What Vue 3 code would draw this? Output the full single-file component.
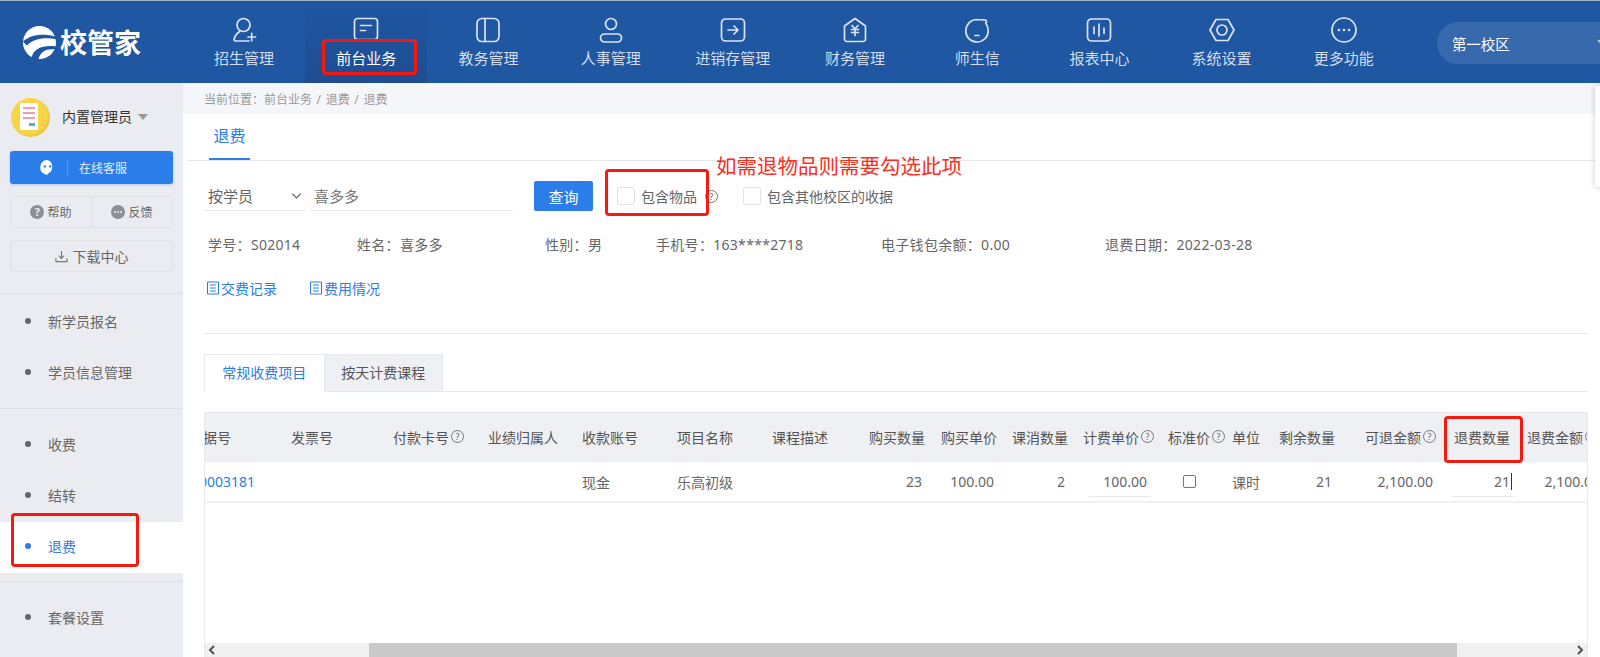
<script setup>
const navItems = [
  { label: '招生管理', paths: ['M18 24H4.5c-1 0-1.500-.8-1.300-1.700.7-3.300 2.600-6 5.500-7.800', 'M17 20h7.500M20.700 16.300v7.500'], circles: [[12.500, 8, 6.500]] },
  { label: '前台业务', active: true, rects: [[1.500, 1.500, 23, 21, 3]], paths: ['M7.500 8.500h11M7.500 13.500h5'] },
  { label: '教务管理', rects: [[2, 1.500, 22, 23, 5]], paths: ['M10 1.500v23'] },
  { label: '人事管理', rects: [[2.500, 17, 21, 8, 4]], circles: [[13, 7, 5.500]] },
  { label: '进销存管理', rects: [[1.500, 2, 23, 22, 4]], paths: ['M8 13h10M14 9l4 4-4 4'] },
  { label: '财务管理', paths: ['M13 1.500l10.500 7.500v13a2.500 2.500 0 0 1-2.500 2.500H5A2.500 2.500 0 0 1 2.500 22V9z', 'M10 8.500l3 3.500 3-3.500M9.500 12.500h7M9.500 15.500h7M13 12v6.500'] },
  { label: '师生信', paths: ['M13 2.500C6.700 2.500 1.800 7.700 1.800 14s5 11 11.200 11 11.200-5 11.200-11c0-3-.9-5.800-2.500-8 1.300-1 1.200-2.500-.4-2.800-2.500-.5-5.400-.7-8.500-.7z', 'M11 18.500h4'] },
  { label: '报表中心', rects: [[1.500, 2, 23, 22, 4]], paths: ['M8 10v6.500M13 7v12M18 11v5.500'] },
  { label: '系统设置', paths: ['M7 2.500h12l6 10.500-6 10.500H7L1 13z'], circles: [[13, 13, 5]] },
  { label: '更多功能', circles: [[13, 13, 12]], dots: [[8, 13], [13, 13], [18, 13]] }
]

const menuGroups = [
  ['新学员报名', '学员信息管理'],
  ['收费', '结转', '退费'],
  ['套餐设置']
]

const infoItems = ['学号：S02014', '姓名：喜多多', '性别：男', '手机号：163****2718', '电子钱包余额：0.00', '退费日期：2022-03-28']

const columns = [
  { title: '单据号', value: '00003181', link: true },
  { title: '发票号' },
  { title: '付款卡号', help: true },
  { title: '业绩归属人' },
  { title: '收款账号', value: '现金' },
  { title: '项目名称', value: '乐高初级' },
  { title: '课程描述' },
  { title: '购买数量', value: '23', right: true },
  { title: '购买单价', value: '100.00', right: true },
  { title: '课消数量', value: '2', right: true },
  { title: '计费单价', help: true, value: '100.00', input: true, right: true },
  { title: '标准价', help: true, check: true },
  { title: '单位', value: '课时' },
  { title: '剩余数量', value: '21', right: true },
  { title: '可退金额', help: true, value: '2,100.00', right: true },
  { title: '退费数量', value: '21', input: true, caret: true, right: true },
  { title: '退费金额', help: true, value: '2,100.00', right: true }
]
</script>

<template>
  <div class="page">
    <header class="topbar">
      <div class="logo">
        <svg class="logo-mark" viewBox="0 0 36 36" aria-hidden="true">
          <circle cx="18" cy="18" r="17" fill="#fff" />
          <path d="M1 17c7-7 20-9 34-5l1 3C24 12 12 14 5 21z" fill="#1f57a3" />
          <path d="M10 35c0-9 9-15 25-13l-1 3c-9-1-15 2-17 10z" fill="#1f57a3" />
        </svg>
        <span class="logo-text">校管家</span>
      </div>
      <nav class="nav">
        <a v-for="item in navItems" :key="item.label" class="nav-item" :class="{ active: item.active }">
          <svg class="nav-icon" viewBox="0 0 26 26" aria-hidden="true">
            <rect v-for="(r, i) in item.rects" :key="'r' + i" :x="r[0]" :y="r[1]" :width="r[2]" :height="r[3]" :rx="r[4]" />
            <circle v-for="(c, i) in item.circles" :key="'c' + i" :cx="c[0]" :cy="c[1]" :r="c[2]" />
            <path v-for="(d, i) in item.paths" :key="'p' + i" :d="d" />
            <circle v-for="(c, i) in item.dots" :key="'d' + i" class="dot" :cx="c[0]" :cy="c[1]" r="1.300" />
          </svg>
          <span>{{ item.label }}</span>
        </a>
      </nav>
      <div class="campus">
        <span>第一校区</span>
        <svg class="campus-arrow" viewBox="0 0 12 8" aria-hidden="true"><path d="M1 1l5 5 5-5" /></svg>
      </div>
    </header>

    <div class="body">
      <aside class="sidebar">
        <div class="user">
          <div class="avatar"><div class="avatar-card"><i></i><i></i><i></i><b></b></div></div>
          <span class="user-name">内置管理员</span>
          <span class="user-arrow"></span>
        </div>
        <button class="service">
          <svg class="service-icon" viewBox="0 0 16 16" aria-hidden="true">
            <path d="M8 1a6.800 6.800 0 0 0-3 12.900c1 .5 2 1 3.500 1.100-.4-.4-.6-.8-.6-1.200A6.800 6.800 0 0 0 8 1z" fill="#fff" />
            <circle cx="5.500" cy="7" r="1.100" fill="#2b7de9" />
            <circle cx="10.500" cy="7" r="1.100" fill="#2b7de9" />
          </svg>
          <span class="service-line"></span>
          <span>在线客服</span>
        </button>
        <div class="help-row">
          <a class="help-btn">
            <span class="round-icon">?</span>帮助
          </a>
          <a class="help-btn">
            <svg class="round-svg" viewBox="0 0 14 14" aria-hidden="true">
              <circle cx="7" cy="7" r="7" fill="#8e8e93" />
              <circle cx="4" cy="7" r="1" fill="#ebecf1" />
              <circle cx="7" cy="7" r="1" fill="#ebecf1" />
              <circle cx="10" cy="7" r="1" fill="#ebecf1" />
            </svg>反馈
          </a>
        </div>
        <a class="download">
          <svg viewBox="0 0 14 14" aria-hidden="true"><path d="M7 1v8M4 6l3 3 3-3M1 9v3.500h12V9" /></svg>
          下载中心
        </a>
        <div class="menu">
          <div v-for="(group, i) in menuGroups" :key="i" class="menu-group">
            <a v-for="name in group" :key="name" class="menu-item" :class="{ current: name === '退费' }">
              <span class="menu-dot"></span>{{ name }}
            </a>
          </div>
        </div>
      </aside>

      <main class="main">
        <div class="crumb">当前位置：前台业务 / 退费 / 退费</div>
        <div class="content">
          <div class="page-tabs"><span class="page-tab">退费</span></div>

          <div class="filter">
            <div class="field field-select">按学员
              <svg viewBox="0 0 12 8" aria-hidden="true"><path d="M1.500 1.500L6 6l4.500-4.500" /></svg>
            </div>
            <div class="field field-input">喜多多</div>
            <button class="query">查询</button>
            <label class="check first"><span class="box"></span>包含物品</label>
            <span class="help-mark">?</span>
            <label class="check second"><span class="box"></span>包含其他校区的收据</label>
          </div>

          <div class="info">
            <span v-for="text in infoItems" :key="text">{{ text }}</span>
          </div>

          <div class="links">
            <a v-for="text in ['交费记录', '费用情况']" :key="text" class="link">
              <svg viewBox="0 0 14 14" aria-hidden="true"><path d="M1.500 1h11v12h-11zM4 4h6M4 7h6M4 10h6" /></svg>{{ text }}
            </a>
          </div>

          <div class="split"></div>

          <div class="card-tabs">
            <span class="card-tab on">常规收费项目</span>
            <span class="card-tab">按天计费课程</span>
          </div>

          <div class="table-wrap">
            <div class="table">
              <div v-for="col in columns" :key="col.title" class="cell head" :class="{ right: col.right }">
                {{ col.title }}<span v-if="col.help" class="help-mark small">?</span>
              </div>
              <div v-for="col in columns" :key="col.title + '-v'" class="cell row" :class="{ right: col.right, link: col.link }">
                <span v-if="col.check" class="row-check"></span>
                <span v-else-if="col.input" class="row-input" :class="{ caret: col.caret }">{{ col.value }}</span>
                <template v-else>{{ col.value }}</template>
              </div>
            </div>
            <div class="scrollbar">
              <svg class="scroll-arrow" viewBox="0 0 8 12" aria-hidden="true"><path d="M6 2L2 6l4 4" /></svg>
              <div class="scroll-track"><div class="scroll-thumb"></div></div>
              <svg class="scroll-arrow" viewBox="0 0 8 12" aria-hidden="true"><path d="M2 2l4 4-4 4" /></svg>
            </div>
          </div>
        </div>
      </main>
    </div>

    <div class="side-float"></div>

    <!-- 红色标注 -->
    <div class="mark mark-nav"></div>
    <div class="mark mark-check"></div>
    <div class="mark mark-col"></div>
    <div class="mark mark-menu"></div>
    <div class="mark-text">如需退物品则需要勾选此项</div>
  </div>
</template>

<style scoped>
.page {
  position: relative;
  width: 1600px;
  height: 657px;
  overflow: hidden;
  display: flex;
  flex-direction: column;
  font-family: "Noto Sans", "Noto Sans CJK SC", sans-serif;
  font-size: 14px;
  color: #666;
  background: #fff;
}

.topbar {
  flex: none;
  height: 82px;
  display: flex;
  background: #1f57a3;
  border-top: 1px solid #9fb0c8;
}

.logo {
  width: 183px;
  flex: none;
  display: flex;
  align-items: center;
  gap: 3px;
  padding-left: 22px;
  box-sizing: border-box;
}

.logo-mark {
  width: 35px;
  height: 35px;
}

.logo-text {
  font-size: 27px;
  font-weight: 700;
  color: #fff;
  line-height: 1;
}

.nav {
  display: flex;
}

.nav-item {
  width: 122.200px;
  display: flex;
  flex-direction: column;
  align-items: center;
  padding-top: 16px;
  box-sizing: border-box;
  font-size: 15px;
  color: #d3dded;
}

.nav-item.active {
  background: linear-gradient(#1f57a3, #1e4c92);
  color: #fff;
}

.nav-icon {
  width: 26px;
  height: 26px;
  margin-bottom: 4px;
  fill: none;
  stroke: #dbe4f1;
  stroke-width: 1.700;
  stroke-linejoin: round;
  stroke-linecap: round;
}

.nav-icon .dot {
  fill: #dbe4f1;
  stroke: none;
}

.campus {
  margin-left: 32px;
  margin-top: 21px;
  flex: none;
  width: 180px;
  height: 42px;
  border-radius: 21px 0 0 21px;
  background: #3869ad;
  display: flex;
  align-items: center;
  padding-left: 15px;
  box-sizing: border-box;
  color: #fff;
  font-size: 14.500px;
}

.campus-arrow {
  width: 12px;
  height: 8px;
  margin-left: 87px;
  fill: none;
  stroke: #dbe4f1;
  stroke-width: 1.300;
}

.body {
  flex: 1;
  display: flex;
  min-height: 0;
}

.sidebar {
  width: 183px;
  flex: none;
  background: #ebecf1;
  padding-top: 15px;
  box-sizing: border-box;
}

.user {
  display: flex;
  align-items: center;
  padding-left: 11px;
  height: 39px;
  color: #333;
}

.avatar {
  width: 39px;
  height: 39px;
  border-radius: 50%;
  background: radial-gradient(circle at 45% 45%, #f7d548 60%, #b9993a 100%);
  display: flex;
  justify-content: center;
  align-items: flex-start;
  padding-top: 5px;
  box-sizing: border-box;
}

.avatar-card {
  width: 18px;
  height: 27px;
  background: #fff;
  display: flex;
  flex-direction: column;
  gap: 3px;
  padding: 4px 3px;
  box-sizing: border-box;
  margin-right: 3px;
}

.avatar-card i {
  display: block;
  height: 2px;
  background: #ee9db0;
}

.avatar-card b {
  display: block;
  width: 6px;
  height: 3px;
  margin: 1px 0 0 6px;
  background: #4bb3d8;
}

.user-name {
  margin-left: 12px;
  margin-top: -3px;
}

.user-arrow {
  margin-left: 6px;
  margin-top: -2px;
  border-left: 5px solid transparent;
  border-right: 5px solid transparent;
  border-top: 6px solid #999;
}

.service {
  display: flex;
  align-items: center;
  width: 163px;
  height: 33px;
  margin: 14px 0 0 10px;
  padding: 0 0 0 29px;
  box-sizing: border-box;
  border: 0;
  border-radius: 3px;
  background: #2b7de9;
  color: #e4eefc;
  font: inherit;
  font-size: 12px;
  box-shadow: 0 1px 3px rgba(43, 125, 233, 0.3);
}

.service-icon {
  width: 17px;
  height: 17px;
}

.service-line {
  width: 1px;
  height: 16px;
  margin: 0 11px 0 11px;
  background: rgba(255, 255, 255, 0.2);
}

.help-row {
  display: flex;
  width: 163px;
  height: 32px;
  margin: 12px 0 0 10px;
  border: 1px solid #e0e1e6;
  border-radius: 4px;
  box-sizing: border-box;
  font-size: 12px;
}

.help-btn {
  flex: 1;
  display: flex;
  align-items: center;
  justify-content: center;
  gap: 3px;
}

.help-btn + .help-btn {
  border-left: 1px solid #e0e1e6;
}

.round-icon {
  width: 14px;
  height: 14px;
  border-radius: 50%;
  background: #8e8e93;
  color: #ebecf1;
  font-size: 11px;
  font-weight: 700;
  line-height: 14px;
  text-align: center;
}

.round-svg {
  width: 14px;
  height: 14px;
}

.download {
  display: flex;
  align-items: center;
  justify-content: center;
  gap: 5px;
  width: 163px;
  height: 32px;
  margin: 12px 0 0 10px;
  border: 1px solid #e0e1e6;
  border-radius: 4px;
  box-sizing: border-box;
}

.download svg {
  width: 13px;
  height: 13px;
  fill: none;
  stroke: #777;
  stroke-width: 1.200;
}

.menu {
  margin-top: 21px;
}

.menu-group {
  padding: 11px 0 8px;
  border-top: 1px solid #dfe0e5;
}

.menu-group:first-child {
  padding: 3px 0 9px;
}

.menu-item {
  height: 51px;
  box-sizing: border-box;
  display: flex;
  align-items: center;
  padding: 0 0 3px 25px;
  color: #666;
}

.menu-dot {
  width: 6px;
  height: 6px;
  border-radius: 50%;
  background: #666;
  margin-right: 17px;
}

.menu-item.current {
  background: #fff;
  color: #2b7de9;
}

.menu-item.current .menu-dot {
  background: #2b7de9;
}

.main {
  flex: 1;
  min-width: 0;
  display: flex;
  flex-direction: column;
}

.crumb {
  flex: none;
  height: 31px;
  line-height: 33px;
  padding-left: 21px;
  background: #f5f6fa;
  font-size: 12px;
  word-spacing: 1.500px;
  color: #999;
}

.content {
  flex: 1;
  min-height: 0;
  padding-left: 4px;
  display: flex;
  flex-direction: column;
}

.page-tabs {
  flex: none;
  height: 46px;
  border-bottom: 1px solid #e8e9ef;
  padding-left: 22px;
}

.page-tab {
  display: inline-block;
  width: 41px;
  height: 46px;
  box-sizing: border-box;
  padding-top: 10px;
  font-size: 16px;
  line-height: 24px;
  text-align: center;
  white-space: nowrap;
  color: #2b7de9;
  border-bottom: 2px solid #2b7de9;
}

.filter {
  flex: none;
  height: 30px;
  margin-top: 20px;
  display: flex;
  align-items: center;
  padding-left: 17px;
}

.field {
  height: 30px;
  box-sizing: border-box;
  border-bottom: 1px solid #e8e9ef;
  display: flex;
  align-items: center;
  padding-left: 4px;
  font-size: 15px;
  color: #666;
}

.field-select {
  width: 101px;
  justify-content: space-between;
  padding-right: 3px;
}

.field-select svg {
  width: 11px;
  height: 8px;
  fill: none;
  stroke: #666;
  stroke-width: 1.300;
}

.field-input {
  width: 203px;
  margin-left: 5px;
  color: #777;
}

.query {
  width: 59px;
  height: 30px;
  margin-left: 21px;
  padding: 0;
  border: 0;
  border-radius: 2px;
  background: #2b7de9;
  color: #fff;
  font: inherit;
  font-size: 15px;
}

.check {
  display: flex;
  align-items: center;
  gap: 6px;
  color: #666;
}

.check.first {
  margin-left: 24px;
}

.check.second {
  margin-left: 25px;
}

.box {
  width: 18px;
  height: 18px;
  box-sizing: border-box;
  border: 1px solid #dfe1e8;
  border-radius: 3px;
  background: #fff;
}

.help-mark {
  display: inline-block;
  flex: none;
  width: 11px;
  height: 11px;
  margin-left: 8px;
  border: 1px solid #777;
  border-radius: 50%;
  font-size: 9px;
  line-height: 11px;
  text-align: center;
  color: #666;
}

.help-mark.small {
  margin-left: 2px;
  vertical-align: 1px;
}

.info {
  flex: none;
  margin-top: 18px;
  padding-left: 21px;
  height: 30px;
  display: grid;
  grid-template-columns: 149px 188px 111px 225px 224px auto;
  align-items: center;
  letter-spacing: 0.300px;
  color: #666;
}

.links {
  flex: none;
  margin-top: 14px;
  padding-left: 19px;
  height: 30px;
  display: flex;
  align-items: center;
  gap: 32px;
}

.link {
  display: flex;
  align-items: center;
  gap: 1px;
  color: #2b7de9;
}

.link svg {
  width: 14px;
  height: 14px;
  fill: none;
  stroke: #2b7de9;
  stroke-width: 1;
}

.split {
  flex: none;
  height: 1px;
  margin: 30px 12px 0 17px;
  background: #e8e9ef;
}

.card-tabs {
  flex: none;
  margin: 20px 12px 0 17px;
  height: 37px;
  display: flex;
  border-bottom: 1px solid #e8e9ef;
}

.card-tab {
  width: 119.500px;
  box-sizing: border-box;
  height: 37px;
  border: 1px solid #e8e9ef;
  border-bottom: 0;
  text-align: center;
  line-height: 36px;
  background: #eff0f4;
  color: #555;
}

.card-tab.on {
  background: #fff;
  color: #2b7de9;
  border-right: 0;
  margin-bottom: -1px;
  height: 38px;
}

.table-wrap {
  flex: 1;
  min-height: 0;
  margin: 20px 12px 0 17px;
  border-left: 1px solid #e8e9ef;
  border-right: 1px solid #e8e9ef;
  display: flex;
  flex-direction: column;
  overflow: hidden;
}

.table {
  flex: 1;
  min-height: 0;
  margin-left: -23px;
  display: grid;
  grid-template-columns: 102px 102px 95px 94px 95px 95px 96px 71px 72px 71px 86px 64px 55px 62px 101px 74px 88px;
  grid-template-rows: 50px 41px;
  align-content: start;
}

.cell {
  padding: 0 7px;
  display: flex;
  align-items: center;
  white-space: nowrap;
}

.cell.head {
  background: #eff0f4;
  border-top: 1px solid #e8e9ef;
  padding-bottom: 2px;
  color: #555;
}

.cell.row {
  border-bottom: 2px solid #f0f1f5;
  color: #666;
}

.cell.right {
  justify-content: flex-end;
}

.cell.row.right {
  padding-right: 10px;
}

.cell.row.right:last-child {
  padding-right: 5px;
}

.cell.link {
  padding-left: 9px;
  color: #2b7de9;
}

.row-input {
  width: 61px;
  height: 30px;
  flex: none;
  box-sizing: border-box;
  border-bottom: 1px solid #e8e9ef;
  display: flex;
  align-items: center;
  justify-content: flex-end;
  padding-right: 3px;
  margin-right: 1px;
}

.row-input.caret {
  padding-right: 2px;
  margin-right: -7px;
}

.row-input.caret::after {
  content: '';
  width: 1px;
  height: 17px;
  margin-left: 1px;
  background: #333;
}

.row-check {
  width: 13px;
  height: 13px;
  margin-left: 15px;
  box-sizing: border-box;
  border: 1.500px solid #777;
  border-radius: 2px;
}

.scrollbar {
  flex: none;
  height: 14px;
  display: flex;
  align-items: center;
  background: #f1f1f1;
}

.scroll-arrow {
  flex: none;
  width: 14px;
  height: 12px;
  fill: none;
  stroke: #505050;
  stroke-width: 2;
}

.scroll-track {
  flex: 1;
  height: 14px;
}

.scroll-thumb {
  width: 1088px;
  height: 14px;
  margin-left: 150px;
  background: #c9c9c9;
}

.side-float {
  position: absolute;
  top: 86px;
  right: -10px;
  width: 15px;
  height: 101px;
  background: #fff;
  border-radius: 3px;
  box-shadow: 0 0 6px rgba(0, 0, 0, 0.2);
}

.mark {
  position: absolute;
  box-sizing: border-box;
  border: 3px solid #f5190f;
  border-radius: 4px;
}

.mark-nav {
  left: 322px;
  top: 39px;
  width: 95px;
  height: 36px;
}

.mark-check {
  left: 605px;
  top: 169px;
  width: 104px;
  height: 47px;
}

.mark-col {
  left: 1444px;
  top: 416px;
  width: 79px;
  height: 47px;
}

.mark-menu {
  left: 11px;
  top: 513px;
  width: 128px;
  height: 54px;
}

.mark-text {
  position: absolute;
  left: 716px;
  top: 151px;
  font-size: 20.500px;
  line-height: 30px;
  color: #fb2c20;
}
</style>
